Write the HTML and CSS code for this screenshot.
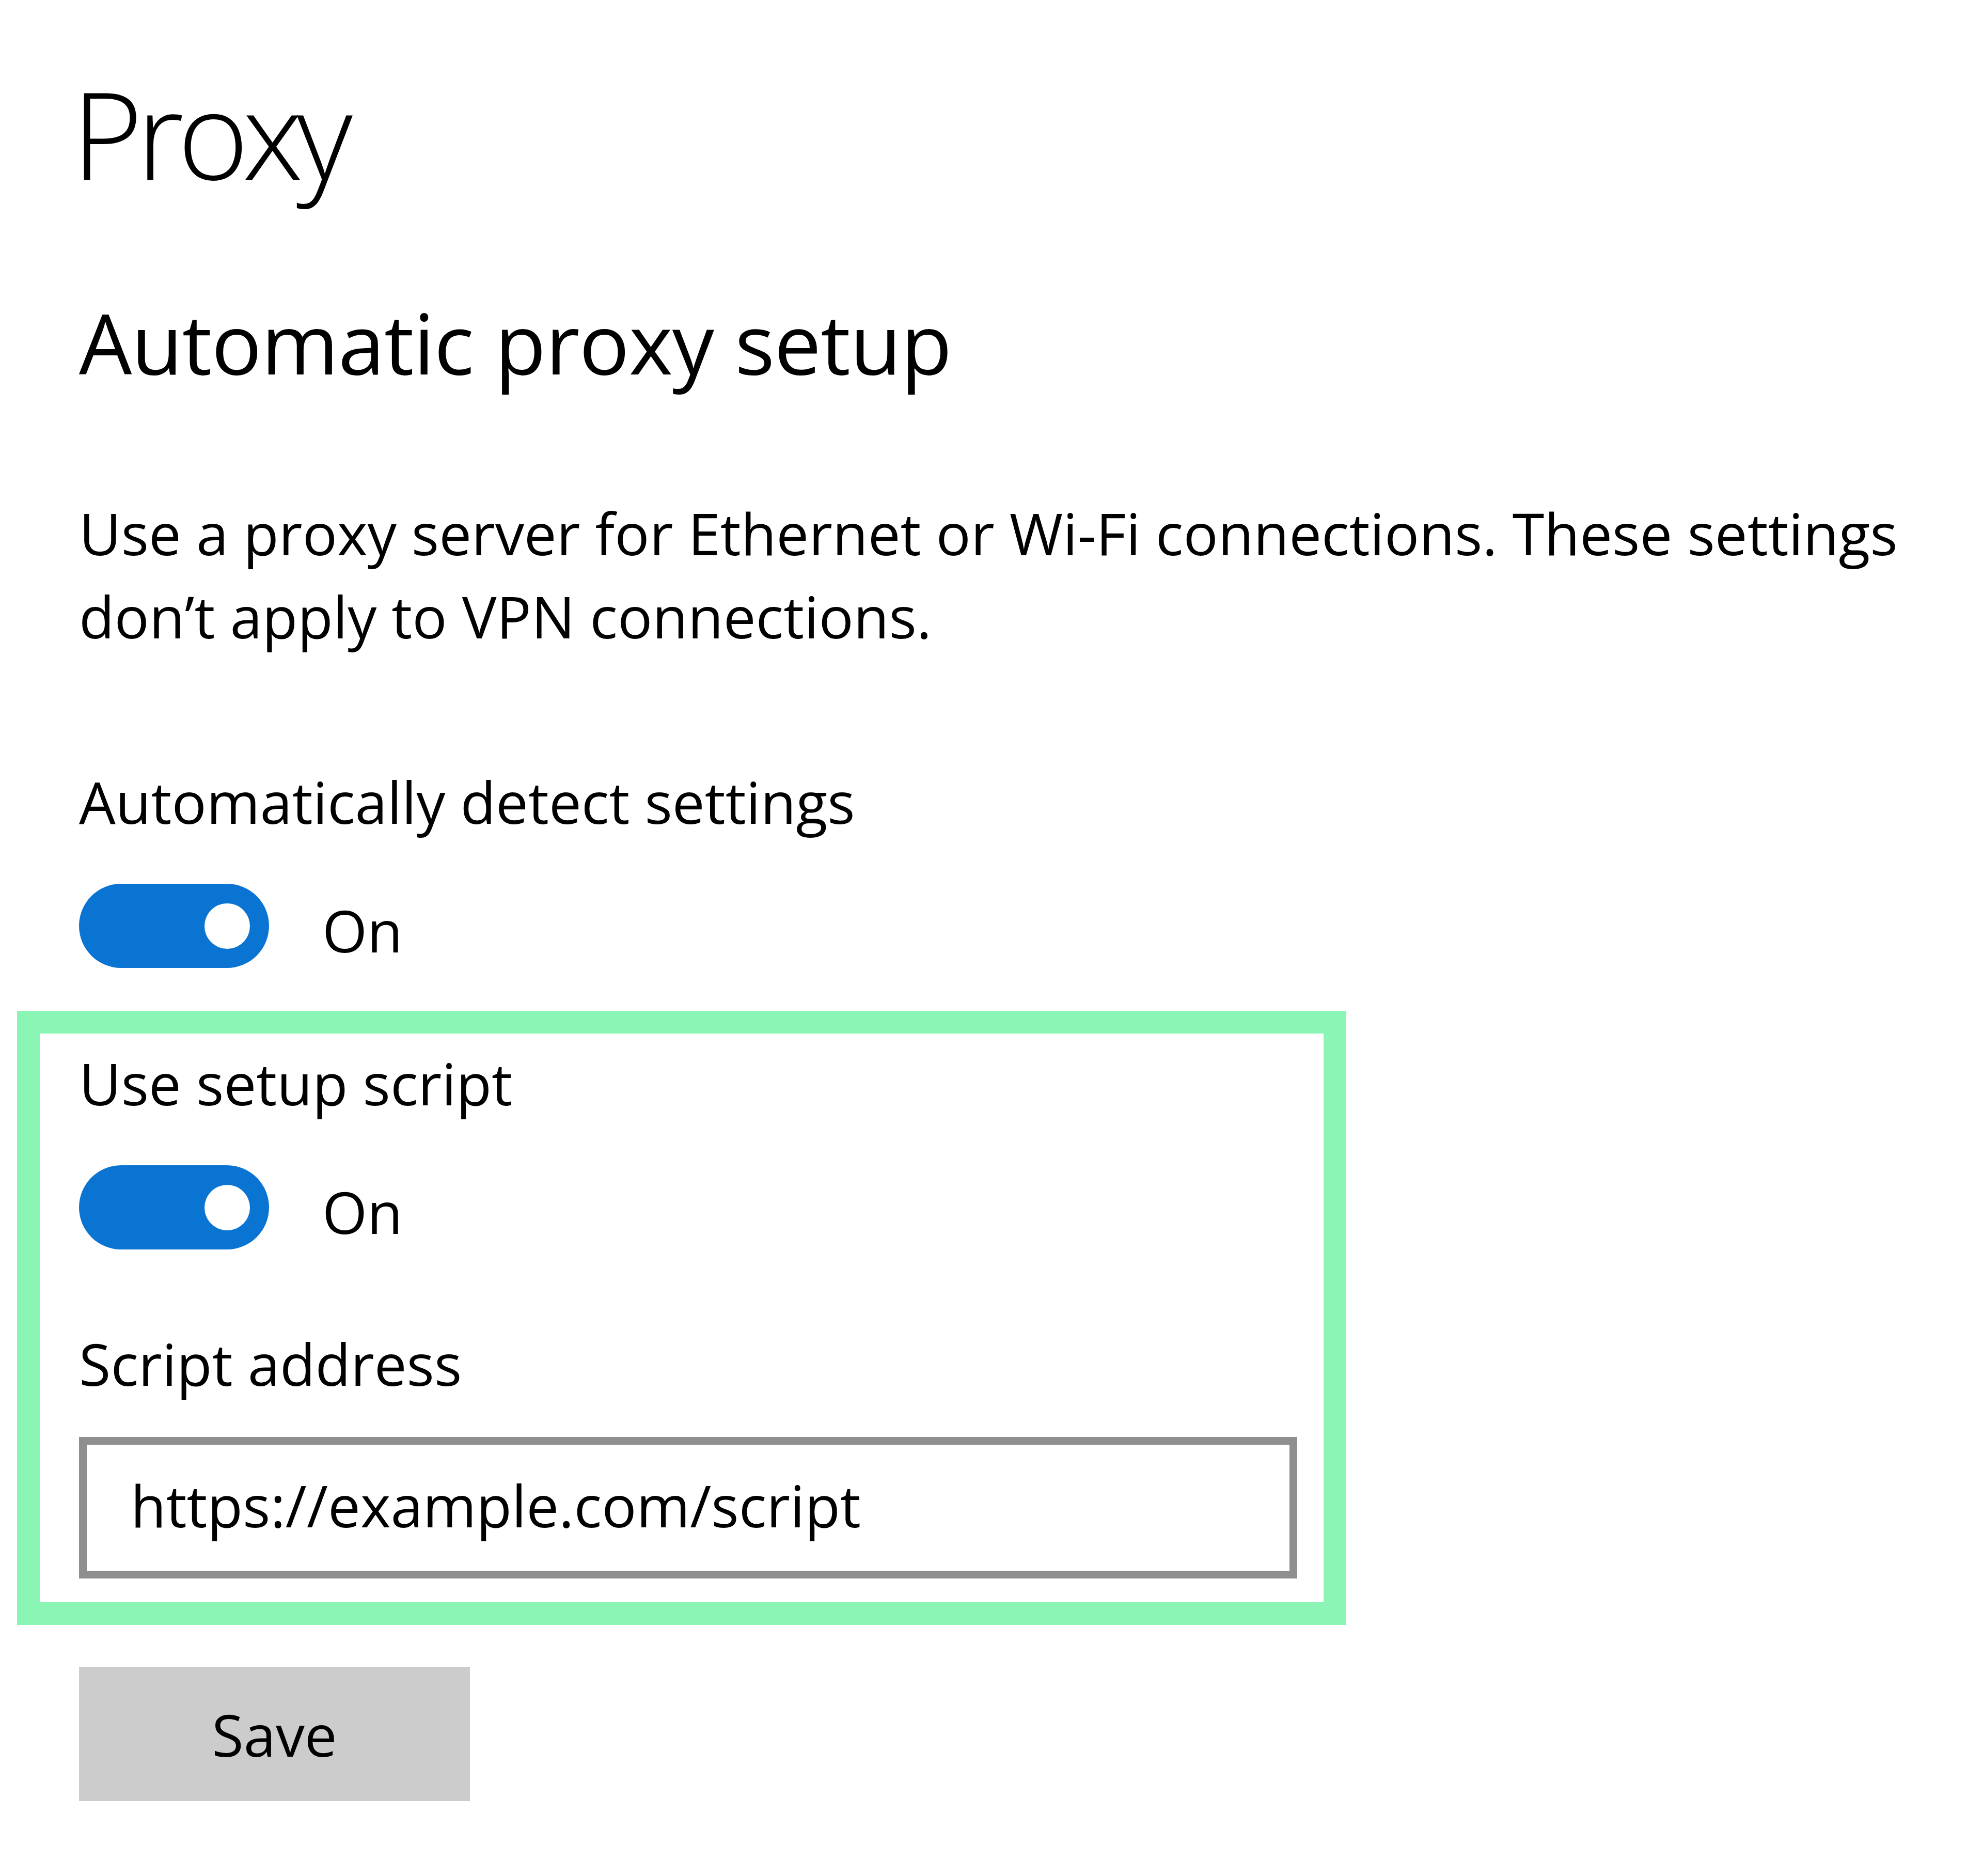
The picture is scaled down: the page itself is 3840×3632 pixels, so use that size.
FILE: index.html
```html
<!DOCTYPE html>
<html lang="en">
<head>
    <meta charset="UTF-8">
    <title>Proxy</title>
    <link rel="stylesheet" href="styles.css">
</head>
<body>

<main class="page">
    <h1 class="page-title">Proxy</h1>

    <h2 class="section-title">Automatic proxy setup</h2>
    <p class="section-desc">Use a proxy server for Ethernet or Wi-Fi connections. These settings don’t apply to VPN connections.</p>

    <!-- Automatically detect -->
    <div class="setting setting-detect">
        <div class="setting-label">Automatically detect settings</div>
        <div class="toggle-row">
            <span class="toggle is-on" role="switch" aria-checked="true"><span class="knob"></span></span>
            <span class="toggle-text">On</span>
        </div>
    </div>

    <!-- Setup script (highlighted) -->
    <div class="highlight">
        <div class="setting">
            <div class="setting-label">Use setup script</div>
            <div class="toggle-row">
                <span class="toggle is-on" role="switch" aria-checked="true"><span class="knob"></span></span>
                <span class="toggle-text">On</span>
            </div>
        </div>
        <div class="setting setting-address">
            <label class="setting-label" for="scriptAddress">Script address</label>
            <input type="text" id="scriptAddress" class="text-input" value="https://example.com/script">
        </div>
    </div>

    <button type="button" class="save-btn">Save</button>
</main>

</body>
</html>
```

FILE: styles.css
```css
html, body {
    margin: 0;
    background-color: #fff;
}
body {
    font-family: "Open Sans", "Noto Sans", sans-serif;
    color: #000;
}
.page {
    padding: 107px 0 120px 153px;
}
.page-title {
    margin: 0 0 0 -14px;
    font-size: 235px;
    font-weight: 300;
    line-height: 300px;
    letter-spacing: -12px;
}
.section-title {
    margin: 155px 0 0;
    font-size: 162px;
    font-weight: 400;
    line-height: 200px;
    letter-spacing: -1px;
}
.section-desc {
    margin: 189px 0 0;
    max-width: 3620px;
    font-size: 112px;
    line-height: 161px;
}
.setting-label {
    display: block;
    font-size: 112px;
    line-height: 161px;
}
.setting-detect {
    margin-top: 198px;
}
.toggle-row {
    display: flex;
    align-items: center;
    gap: 103px;
    margin-top: 79px;
}
.toggle {
    display: flex;
    align-items: center;
    justify-content: flex-end;
    box-sizing: border-box;
    width: 368px;
    height: 163px;
    padding-right: 37px;
    border-radius: 82px;
    background-color: #0a74d2;
}
.knob {
    width: 88px;
    height: 88px;
    border-radius: 50%;
    background-color: #fff;
}
.toggle-text {
    padding-top: 16px;
    font-size: 112px;
    line-height: 145px;
}
.highlight {
    width: 2574px;
    box-sizing: border-box;
    margin: 83px 0 0 -120px;
    padding: 15px 0 46px 76px;
    border: 44px solid #8af5b4;
}
.setting-address {
    margin-top: 140px;
}
.text-input {
    display: block;
    box-sizing: border-box;
    width: 2359px;
    height: 274px;
    margin-top: 62px;
    padding: 0 0 12px 85px;
    border: 15px solid #8f8f8f;
    border-radius: 0;
    background: #fff;
    font-family: inherit;
    font-size: 112px;
    color: #000;
    outline: none;
}
.save-btn {
    display: flex;
    align-items: center;
    justify-content: center;
    width: 757px;
    height: 260px;
    margin-top: 81px;
    padding: 0;
    border: none;
    background-color: #cccccc;
    font-family: inherit;
    font-size: 112px;
    line-height: 161px;
    color: #000;
}
```
